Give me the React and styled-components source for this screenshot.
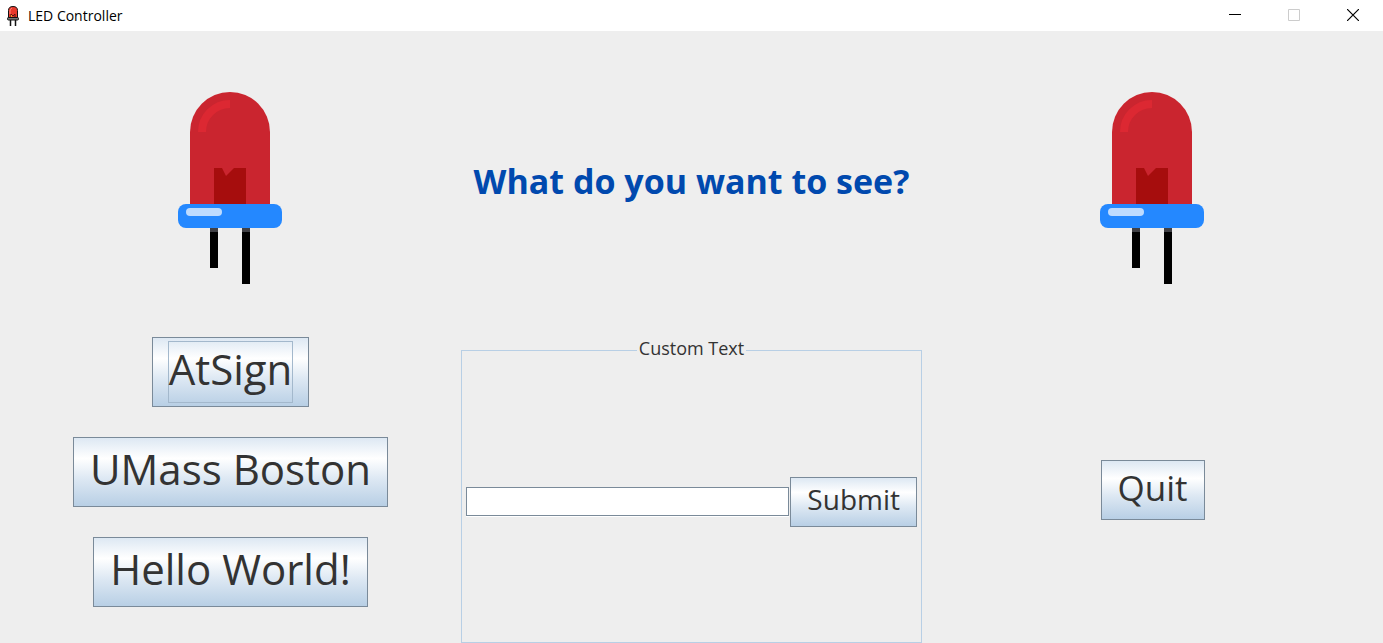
import React from "react";
import styled, { createGlobalStyle, css } from "styled-components";

const GlobalStyle = createGlobalStyle`
  *, *::before, *::after { box-sizing: border-box; }
  body { margin: 0; background: #eeeeee; }
`;

const Window = styled.div`
  display: flex;
  flex-direction: column;
  min-height: 100vh;
  background: #eeeeee;
  color: #333333;
  font-family: "Open Sans", "Noto Sans", sans-serif;
`;

const TitleBar = styled.header`
  display: flex;
  align-items: center;
  height: 31px;
  padding: 0 1px 0 6px;
  background: #ffffff;
  color: #000000;
`;

const WindowTitle = styled.span`
  flex: 1;
  margin-left: 8px;
  font-size: 14px;
  line-height: 20px;
`;

const WindowControl = styled.button`
  display: flex;
  align-items: center;
  align-self: flex-start;
  justify-content: center;
  width: 59px;
  height: 30px;
  padding: 0;
  border: 0;
  background: transparent;
  color: #000000;

  &:disabled { color: #cccccc; }
`;

const Content = styled.main`
  flex: 1;
  display: grid;
  grid-template-columns: repeat(3, minmax(0, 1fr));
  grid-template-rows: repeat(2, minmax(0, 1fr));
`;

const Cell = styled.section`
  display: flex;
  align-items: center;
  justify-content: center;
`;

const Presets = styled.section`
  display: flex;
  flex-direction: column;
  align-items: center;
  gap: 30px;
`;

const Heading = styled.h1`
  margin: 0;
  padding-bottom: 6px;
  color: #0049ae;
  font-size: 34px;
  line-height: 44px;
  font-weight: 700;
  white-space: nowrap;
`;

const buttonSizes = {
  large: css`height: 70px; font-size: 42px;`,
  medium: css`height: 60px; font-size: 35px;`,
  small: css`height: 50px; font-size: 28px;`,
};

const MetalButton = styled.button`
  display: flex;
  flex: none;
  padding: 3px 15px;
  border: 1px solid #7a8a99;
  background: linear-gradient(#dde8f3, #ffffff 30%, #dde8f3 60%, #b8cfe5);
  color: #333333;
  font-family: inherit;
  white-space: nowrap;
  ${({ $size }) => buttonSizes[$size]}
`;

const ButtonLabel = styled.span`
  display: flex;
  align-items: center;
  height: 100%;
  padding-bottom: 6px;
  border: 1px solid ${({ $focused }) => ($focused ? "#a3b8cc" : "transparent")};
  line-height: 1;
`;

const CustomText = styled.fieldset`
  display: flex;
  align-items: center;
  min-width: 0;
  margin: 0;
  padding: 0 4px 2px;
  border: 1px solid #b8cfe5;
`;

const Legend = styled.legend`
  margin: 0 auto;
  padding: 0 2px 4px;
  font-size: 18px;
  line-height: 22px;
`;

const EntryRow = styled.div`
  display: flex;
  align-items: center;
  gap: 1px;
  width: 100%;
  height: 100%;
`;

const TextField = styled.input`
  flex: 1;
  min-width: 0;
  height: 29px;
  padding: 0 4px;
  border: 1px solid #7a8a99;
  border-radius: 0;
  background: #ffffff;
  box-shadow: 0 1px 0 #ffffff;
  font-family: inherit;
  font-size: 18px;
  outline: none;
`;

const Led = () => (
  <svg width="105" height="200" viewBox="0 -8 105 200" aria-hidden="true">
    <path d="M12 113V40a40 40 0 0 1 80 0v73z" fill="#ca252f" />
    <path d="M24 40a28 28 0 0 1 28-28" fill="none" stroke="#dc2832" strokeWidth="8" />
    <path d="M36 76h8l4 8 8-8h12v37H36z" fill="#a60d0d" />
    <path d="M32 136h8v40h-8zM64 136h8v56h-8z" fill="#000000" />
    <path d="M32 136h8v4h-8zM64 136h8v4h-8z" fill="#404045" />
    <rect y="112" width="104" height="24" rx="8" fill="#2488ff" />
    <rect x="8" y="116" width="36" height="8" rx="4" fill="#bddbff" />
  </svg>
);

const AppIcon = () => (
  <svg width="14" height="20" viewBox="0 0 14 20" aria-hidden="true">
    <path d="M4.5 13v7M9.5 13v7" stroke="#111111" strokeWidth="1.5" />
    <path d="M2.5 12V4.5Q2.5.5 7 .5t4.5 4V12z" fill="#e8392c" stroke="#111111" />
    <path d="M4 8V5q0-2 2-3" fill="none" stroke="#ff8377" />
    <path d="M5 12V8l2 2 2-2v4" fill="none" stroke="#5b1712" />
    <path d="M5.5 11v-2" stroke="#f5a229" />
    <rect x="1.5" y="11.5" width="11" height="2.5" rx="1" fill="#777777" stroke="#111111" />
  </svg>
);

const ActionButton = ({ size, focused, children, type = "button" }) => (
  <MetalButton type={type} $size={size}>
    <ButtonLabel $focused={focused}>{children}</ButtonLabel>
  </MetalButton>
);

export default function App() {
  return (
    <Window>
      <GlobalStyle />
      <TitleBar>
        <AppIcon />
        <WindowTitle>LED Controller</WindowTitle>
        <WindowControl type="button" aria-label="Minimize">
          <svg width="12" height="12" viewBox="0 0 12 12"><path d="M0 5.5h12" stroke="currentColor" /></svg>
        </WindowControl>
        <WindowControl type="button" aria-label="Maximize" disabled>
          <svg width="12" height="12" viewBox="0 0 12 12"><path d="M.5.5h11v11H.5z" fill="none" stroke="currentColor" /></svg>
        </WindowControl>
        <WindowControl type="button" aria-label="Close">
          <svg width="12" height="12" viewBox="0 0 12 12"><path d="m0 0 12 12M12 0 0 12" stroke="currentColor" strokeWidth="1.2" /></svg>
        </WindowControl>
      </TitleBar>
      <Content>
        <Cell><Led /></Cell>
        <Cell><Heading>What do you want to see?</Heading></Cell>
        <Cell><Led /></Cell>
        <Presets>
          <ActionButton size="large" focused>AtSign</ActionButton>
          <ActionButton size="large">UMass Boston</ActionButton>
          <ActionButton size="large">Hello World!</ActionButton>
        </Presets>
        <CustomText>
          <Legend>Custom Text</Legend>
          <EntryRow>
            <TextField type="text" aria-label="Custom Text" />
            <ActionButton size="small">Submit</ActionButton>
          </EntryRow>
        </CustomText>
        <Cell><ActionButton size="medium">Quit</ActionButton></Cell>
      </Content>
    </Window>
  );
}
